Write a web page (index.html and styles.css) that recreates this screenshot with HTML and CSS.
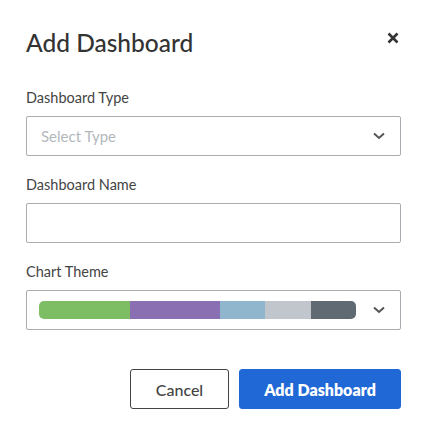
FILE: index.html
```
<!DOCTYPE html>
<html>
<head>
<meta charset="utf-8">
<link rel="stylesheet" href="styles.css">
</head>
<body>
<div class="modal">
  <div class="header">
    <h1 class="title">Add Dashboard</h1>
    <button class="close" aria-label="Close">
      <svg width="12" height="12" viewBox="0 0 12 12"><path d="M1.5 1.5L10.5 10.5M10.5 1.5L1.5 10.5" stroke="#333" stroke-width="2.6" stroke-linecap="butt"/></svg>
    </button>
  </div>
  <div class="field">
    <label class="label">Dashboard Type</label>
    <div class="input select">
      <span class="placeholder">Select Type</span>
      <svg class="chev" width="12" height="8" viewBox="0 0 12 8"><path d="M1 1.5L6 6L11 1.5" fill="none" stroke="#555" stroke-width="2"/></svg>
    </div>
  </div>
  <div class="field">
    <label class="label">Dashboard Name</label>
    <div class="input"></div>
  </div>
  <div class="field">
    <label class="label">Chart Theme</label>
    <div class="input select theme">
      <div class="bar">
        <span class="seg" style="width:91px;background:#7dbd63"></span>
        <span class="seg" style="width:90px;background:#8a6fb2"></span>
        <span class="seg" style="width:45px;background:#8fb6cc"></span>
        <span class="seg" style="width:46px;background:#c0c6cc"></span>
        <span class="seg" style="width:45px;background:#5f6a72"></span>
      </div>
      <svg class="chev" width="12" height="8" viewBox="0 0 12 8"><path d="M1 1.5L6 6L11 1.5" fill="none" stroke="#555" stroke-width="2"/></svg>
    </div>
  </div>
  <div class="actions">
    <button class="btn cancel">Cancel</button>
    <button class="btn primary">Add Dashboard</button>
  </div>
</div>
</body>
</html>
```
FILE: styles.css
```
html, body {
  margin: 0;
  padding: 0;
  background: #fff;
}
body {
  font-family: "Lato", "Liberation Sans", sans-serif;
  color: #333;
}
.modal {
  width: 375px;
  padding: 28px 27px 0 26px;
}
.header {
  display: flex;
  justify-content: space-between;
  align-items: flex-start;
  height: 58px;
}
.title {
  margin: 0;
  font-size: 24.5px;
  font-weight: 500;
  color: #333;
  line-height: 30px;
}
.close {
  border: 0;
  background: none;
  padding: 0;
  margin: 4px 2px 0 0;
  width: 12px;
  height: 12px;
  display: flex;
}
.field {
  display: flex;
  flex-direction: column;
}
.label {
  font-size: 14.5px;
  color: #444;
  line-height: 20px;
  height: 28px;
  margin-top: 2px;
}
.input {
  box-sizing: border-box;
  height: 40px;
  border: 1px solid #a9adb1;
  border-radius: 2px;
  margin-bottom: 17px;
}
.select {
  display: flex;
  align-items: center;
  justify-content: space-between;
  padding: 0 15px 0 14px;
}
.placeholder {
  font-size: 15px;
  color: #b3b8bd;
}
.chev {
  display: block;
}
.theme {
  padding-left: 12px;
}
.bar {
  display: flex;
  height: 18px;
  border-radius: 5px;
  overflow: hidden;
}
.seg {
  display: block;
  height: 100%;
}
.actions {
  display: flex;
  justify-content: flex-end;
  gap: 10px;
  margin-top: 22px;
}
.btn {
  font-family: "Lato", "Liberation Sans", sans-serif;
  font-size: 16px;
  height: 40px;
  border-radius: 3px;
  cursor: pointer;
}
.cancel {
  width: 99px;
  background: #fff;
  border: 1px solid #444;
  color: #444;
  font-weight: 500;
}
.primary {
  width: 162px;
  background: #2068d6;
  border: 1px solid #2068d6;
  color: #fff;
  font-weight: 800;
}
```
